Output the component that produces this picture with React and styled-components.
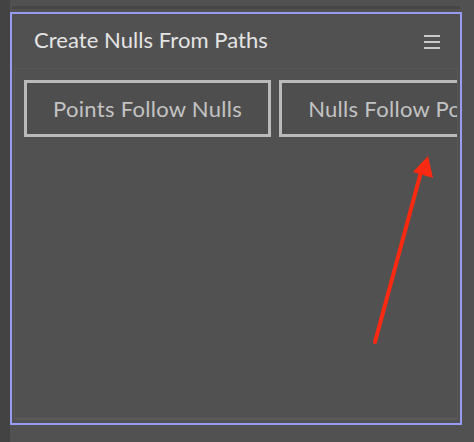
import React from "react";
import styled, { createGlobalStyle } from "styled-components";

const Global = createGlobalStyle`
  html, body { margin: 0; padding: 0; background: #515151; }
  body { width: 474px; height: 442px; overflow: hidden; font-family: Lato, "Open Sans", sans-serif; }
`;

const Page = styled.div`
  position: relative;
  display: flex;
  width: 474px;
  height: 442px;
`;

const SideStrip = styled.div`
  width: 10px;
  background: #434343;
  flex: none;
`;

const Main = styled.div`
  display: flex;
  flex-direction: column;
  flex: 1;
`;

const TabEdge = styled.div`
  margin: 6px 14px 0 2px;
  height: 3px;
  background: #464646;
`;

const Panel = styled.section`
  margin-top: 3px;
  width: 448px;
  height: 409px;
  border: 2px solid #979cf2;
  display: flex;
  flex-direction: column;
  background: #515151;
`;

const Header = styled.header`
  height: 54px;
  display: flex;
  align-items: center;
  justify-content: space-between;
  padding: 0 20px 4px 22px;
  box-sizing: border-box;
`;

const Title = styled.h1`
  margin: 0;
  font-family: Lato, "Open Sans", sans-serif;
  font-weight: 400;
  font-size: 22px;
  color: #e4e4e4;
  letter-spacing: 0.05px;
`;

const Menu = styled.button`
  display: flex;
  flex-direction: column;
  gap: 4px;
  padding: 0;
  border: 0;
  background: none;
  margin-top: 5px;
  span {
    display: block;
    width: 16px;
    height: 2px;
    background: #c9c9c9;
  }
`;

const Content = styled.div`
  flex: 1;
  margin: 0 2px 3px 2px;
  border: 1px solid #575757;
  border-bottom: 2px solid #5a5a5a;
  overflow: hidden;
  padding: 11px 0 0 9px;
`;

const Row = styled.div`
  display: flex;
  gap: 8px;
  white-space: nowrap;
`;

const ActionButton = styled.button`
  flex: none;
  height: 57px;
  padding: 0 26px;
  border: 3px solid #bababa;
  background: #4e4e4e;
  color: #c3c3c3;
  font-family: Lato, "Open Sans", sans-serif;
  font-size: 22px;
  letter-spacing: 0.3px;
  box-sizing: border-box;
`;

const Arrow = styled.svg`
  position: absolute;
  left: 0;
  top: 0;
  pointer-events: none;
`;

export default function App() {
  return (
    <>
      <Global />
      <Page>
        <SideStrip />
        <Main>
          <TabEdge />
          <Panel>
            <Header>
              <Title>Create Nulls From Paths</Title>
              <Menu aria-label="menu">
                <span />
                <span />
                <span />
              </Menu>
            </Header>
            <Content>
              <Row>
                <ActionButton>Points Follow Nulls</ActionButton>
                <ActionButton>Nulls Follow Points</ActionButton>
              </Row>
            </Content>
          </Panel>
        </Main>
        <Arrow width="474" height="442" viewBox="0 0 474 442">
          <line x1="375" y1="342" x2="421" y2="172" stroke="#fa2a12" strokeWidth="4" strokeLinecap="round" />
          <polygon points="428,156 413,172 433,178" fill="#fa2a12" />
        </Arrow>
      </Page>
    </>
  );
}
